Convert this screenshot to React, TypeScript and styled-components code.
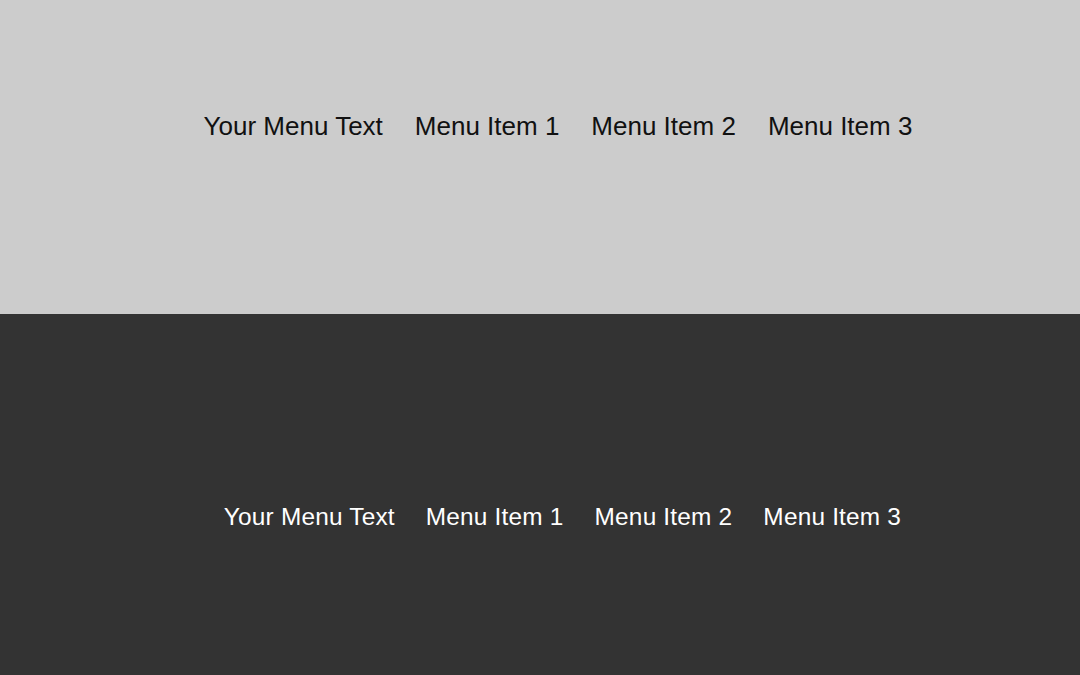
import React from "react";
import styled, { createGlobalStyle } from "styled-components";

const Global = createGlobalStyle`
  html, body { margin: 0; padding: 0; }
  body { font-family: "Liberation Sans", Arial, sans-serif; }
`;

const Page = styled.div`
  width: 1080px;
  height: 675px;
  display: flex;
  flex-direction: column;
`;

const Section = styled.section<{ $dark?: boolean }>`
  height: ${(p) => (p.$dark ? 361 : 314)}px;
  box-sizing: border-box;
  padding-top: ${(p) => (p.$dark ? 189 : 111)}px;
  background: ${(p) => (p.$dark ? "#333333" : "#cccccc")};
`;

const Menu = styled.ul<{ $dark?: boolean }>`
  list-style: none;
  margin: 0;
  padding: 0 0 0 ${(p) => (p.$dark ? 45 : 36)}px;
  display: flex;
  justify-content: center;
  gap: ${(p) => (p.$dark ? 31 : 32)}px;
`;

const Item = styled.li<{ $dark?: boolean }>`
  font-size: ${(p) => (p.$dark ? 24.4 : 26)}px;
  line-height: normal;
  color: ${(p) => (p.$dark ? "#ffffff" : "#111111")};
  letter-spacing: ${(p) => (p.$dark ? 0.2 : 0)}px;
`;

const items = ["Your Menu Text", "Menu Item 1", "Menu Item 2", "Menu Item 3"];

export default function App() {
  return (
    <Page>
      <Global />
      <Section>
        <Menu>
          {items.map((t) => (
            <Item key={t}>{t}</Item>
          ))}
        </Menu>
      </Section>
      <Section $dark>
        <Menu $dark>
          {items.map((t) => (
            <Item key={t} $dark>
              {t}
            </Item>
          ))}
        </Menu>
      </Section>
    </Page>
  );
}
